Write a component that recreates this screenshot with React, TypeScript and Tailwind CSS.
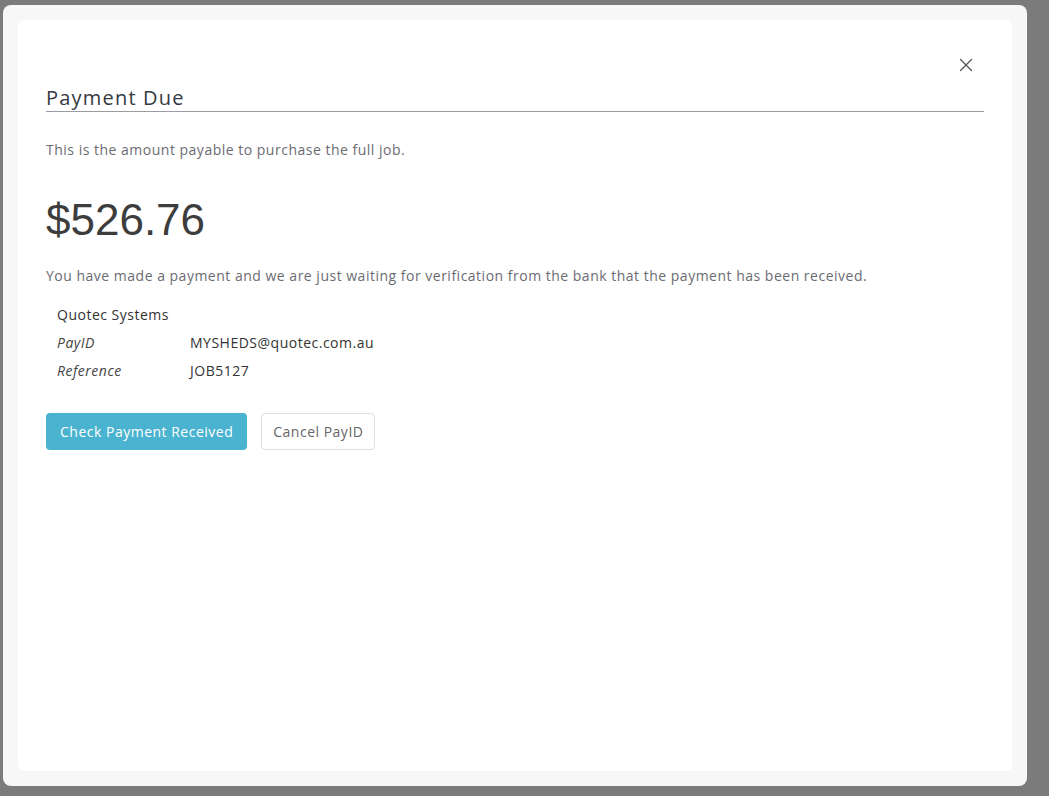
import { X } from "lucide-react";

const font = { fontFamily: "'Open Sans', 'Liberation Sans', sans-serif" };

function DetailRow({ label, value }: { label: string; value: string }) {
  return (
    <div className="flex h-[28px] items-center">
      <span className="w-[133px] italic text-[#444]">{label}</span>
      <span className="text-[#333]">{value}</span>
    </div>
  );
}

export default function App() {
  return (
    <div className="h-[796px] w-full overflow-hidden bg-[#7b7b7b] pl-[3px] pt-[5px]" style={font}>
      <div className="h-[781px] w-[1024px] rounded-lg bg-[#f7f7f7] p-[15px]">
        <div className="h-full rounded-md bg-white px-[28px] pt-[34px] tracking-[0.5px]">
          <div className="flex justify-end pr-[7px]">
            <button className="flex h-[22px] w-[22px] shrink-0 items-center justify-center text-[#555]">
              <X size={22} strokeWidth={1.4} className="shrink-0" />
            </button>
          </div>
          <h2 className="mt-[8px] border-b border-[#9a9ba5] text-[20px] leading-[27px] tracking-[1.2px] text-[#353a42]">
            Payment Due
          </h2>
          <p className="mt-[28px] text-[14px] leading-[20px] text-[#6b6b72]">
            This is the amount payable to purchase the full job.
          </p>
          <div
            className="mt-[30px] text-[44px] leading-[60px] tracking-normal text-[#3d3d3d]"
            style={{ fontFamily: "'Liberation Sans', Arial, sans-serif" }}
          >
            $526.76
          </div>
          <p className="mt-[16px] text-[14px] leading-[20px] text-[#6b6b72]">
            You have made a payment and we are just waiting for verification from the bank that the payment has been
            received.
          </p>
          <div className="mt-[14px] px-[11px] text-[14px]">
            <div className="flex h-[28px] items-center text-[#333]">Quotec Systems</div>
            <DetailRow label="PayID" value="MYSHEDS@quotec.com.au" />
            <DetailRow label="Reference" value="JOB5127" />
          </div>
          <div className="mt-[29px] flex gap-[14px]">
            <button className="h-[37px] rounded bg-[#4ab3cf] px-[14px] text-[14px] text-white">
              Check Payment Received
            </button>
            <button className="h-[37px] rounded border border-[#dedede] bg-white px-[11px] text-[14px] text-[#666]">
              Cancel PayID
            </button>
          </div>
        </div>
      </div>
    </div>
  );
}
